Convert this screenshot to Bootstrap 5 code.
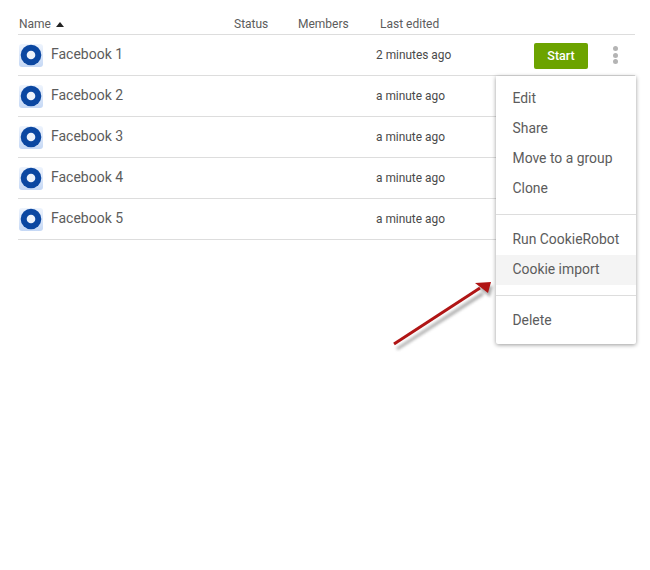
<!DOCTYPE html>
<html lang="en">
<head>
<meta charset="utf-8">
<title>Profiles</title>
<link href="https://cdn.jsdelivr.net/npm/bootstrap@5.3.0/dist/css/bootstrap.min.css" rel="stylesheet">
<style>
html,body{height:100%;overflow:hidden}
body{background:#fff;font-family:Roboto,"Liberation Sans",sans-serif;color:#444;position:relative}
.page{padding:15px 15px 0 18px}
.head-row,.prof-row{display:grid;align-items:center}
.head-row{grid-template-columns:215px 64px 82px 1fr;font-size:12px;color:#5c5c5c;border-bottom:1px solid #ddd;padding:0 0 4px 1px;box-sizing:content-box;height:15px}
.caret-up{display:inline-block;width:0;height:0;border-left:4.5px solid transparent;border-right:4.5px solid transparent;border-bottom:5px solid #222;margin-left:5px;vertical-align:1px}
.prof-row{grid-template-columns:216px 64px 82px 1fr;height:41px;border-bottom:1px solid #ddd;box-sizing:border-box;position:relative}
.name-cell{display:flex;align-items:center;gap:8px;font-size:14px;color:#5c5c5c;grid-column:1/4;padding-left:1px}
.name-txt{margin-top:-2px}
.time-cell{font-size:11.9px;color:#4a4a4a;margin:2px 0 0 -4px}
.ava{flex:none;display:block}
.start-btn{position:absolute;left:516px;top:8px;width:54px;height:26px;padding:0;font-size:12.5px;font-weight:500;line-height:26px;background:#6ca300;border:0;color:#fff;border-radius:2px}
.dots{position:absolute;left:595px;top:11px;width:6px;display:flex;flex-direction:column;gap:1.500px}
.dots i{display:block;width:5px;height:5px;border-radius:50%;background:#b4b4b4}
.pop{position:absolute;left:496px;top:76px;width:140px;height:268px;background:#fff;border-radius:0 0 2px 2px;box-shadow:0 1px 4px rgba(0,0,0,.4);padding:7px 0 0;font-size:13.9px;color:#5c5c5c}
.pop-item{height:30px;line-height:30px;padding-left:16.500px;white-space:nowrap}
.pop-item.low{line-height:28px}
.pop-item.hov{background:#f4f4f4}
.pop-sep{height:1px;background:#ddd;margin:11px 0 10px}
.pop-sep.b{margin:10px 0 9px}
.arrow{position:absolute;left:385px;top:270px}
</style>
</head>
<body>
<svg width="0" height="0" class="d-block position-absolute"><defs>
  <linearGradient id="avabg" x1="0" y1="0" x2="0" y2="1"><stop offset="0" stop-color="#eef4fd"/><stop offset="1" stop-color="#c5d8f5"/></linearGradient>
  <symbol id="avatar" viewBox="0 0 24 24"><rect y="1" width="24" height="23" rx="3" fill="url(#avabg)"/><circle cx="12" cy="12" r="10.300" fill="#0b47a1"/><circle cx="12" cy="12" r="4.300" fill="#eef3fb"/></symbol>
</defs></svg>
<div class="page">
  <div class="head-row"><span>Name<i class="caret-up"></i></span><span>Status</span><span>Members</span><span>Last edited</span></div>
  <div class="prof-row"><div class="name-cell"><svg class="ava" width="24" height="24"><use href="#avatar"/></svg><span class="name-txt">Facebook 1</span></div><span class="time-cell">2 minutes ago</span><button class="btn start-btn" type="button">Start</button><div class="dots"><i></i><i></i><i></i></div></div>
  <div class="prof-row"><div class="name-cell"><svg class="ava" width="24" height="24"><use href="#avatar"/></svg><span class="name-txt">Facebook 2</span></div><span class="time-cell">a minute ago</span></div>
  <div class="prof-row"><div class="name-cell"><svg class="ava" width="24" height="24"><use href="#avatar"/></svg><span class="name-txt">Facebook 3</span></div><span class="time-cell">a minute ago</span></div>
  <div class="prof-row"><div class="name-cell"><svg class="ava" width="24" height="24"><use href="#avatar"/></svg><span class="name-txt">Facebook 4</span></div><span class="time-cell">a minute ago</span></div>
  <div class="prof-row"><div class="name-cell"><svg class="ava" width="24" height="24"><use href="#avatar"/></svg><span class="name-txt">Facebook 5</span></div><span class="time-cell">a minute ago</span></div>
</div>
<div class="pop">
  <div class="pop-item">Edit</div>
  <div class="pop-item">Share</div>
  <div class="pop-item">Move to a group</div>
  <div class="pop-item">Clone</div>
  <div class="pop-sep"></div>
  <div class="pop-item low">Run CookieRobot</div>
  <div class="pop-item low hov">Cookie import</div>
  <div class="pop-sep b"></div>
  <div class="pop-item">Delete</div>
</div>
<svg class="arrow" width="120" height="85" viewBox="0 0 120 85">
  <defs><filter id="soft" x="-20%" y="-20%" width="140%" height="140%"><feGaussianBlur stdDeviation="1.500"/></filter></defs>
  <g fill="#777" opacity=".6" filter="url(#soft)"><path d="M11 78 L97 22 L99 25 L13 80Z"/><path d="M108 16 L92 17 L105 27Z"/></g>
  <path d="M9 74 L95 18" stroke="#b01515" stroke-width="3" fill="none"/>
  <path d="M106 12 L90 13 L103 23Z" fill="#b01515"/>
</svg>
<script src="https://cdn.jsdelivr.net/npm/bootstrap@5.3.0/dist/js/bootstrap.bundle.min.js"></script>
</body>
</html>
